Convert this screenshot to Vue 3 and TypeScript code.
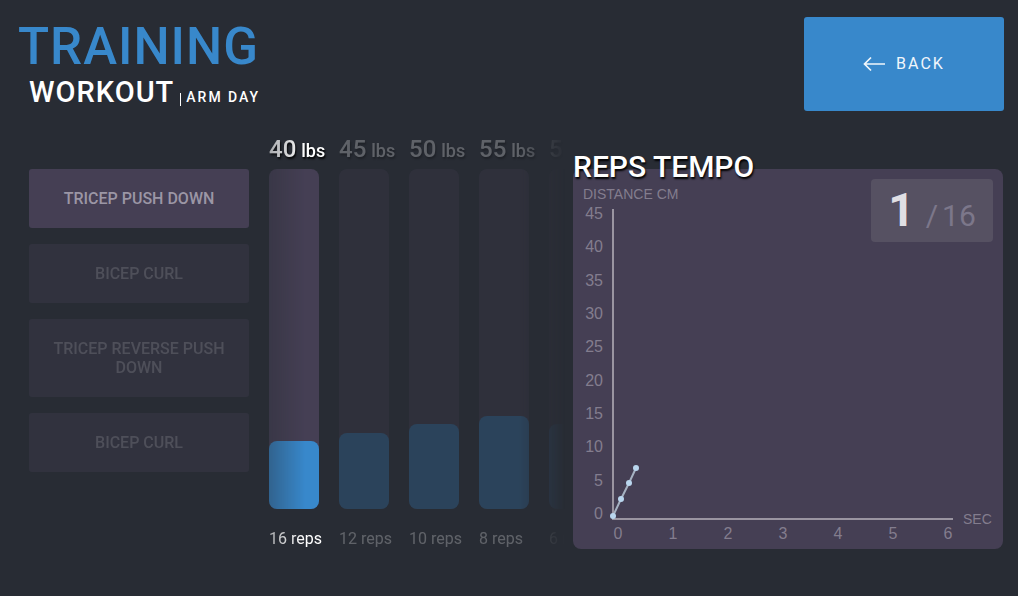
<script setup lang="ts">
import { ref } from 'vue'

interface WorkoutSet {
  weight: number
  reps: number
}

interface Point {
  x: number
  y: number
}

const exercises: string[] = [
  'Tricep push down',
  'Bicep curl',
  'Tricep reverse push down',
  'Bicep curl',
]

const sets: WorkoutSet[] = [
  { weight: 40, reps: 16 },
  { weight: 45, reps: 12 },
  { weight: 50, reps: 10 },
  { weight: 55, reps: 8 },
  { weight: 50, reps: 6 },
]

const MAX_WEIGHT = 200
const activeExercise = ref(0)
const activeSet = ref(0)
const currentRep = ref(1)

const distanceTicks = [45, 40, 35, 30, 25, 20, 15, 10, 5, 0]
const secondTicks = [0, 1, 2, 3, 4, 5, 6]

const tickY = (i: number): number => Math.round(50 + (i * 300) / 9)
const tickX = (i: number): number => 45 + i * 55

const points: Point[] = [
  { x: 40, y: 347 },
  { x: 48, y: 330 },
  { x: 56, y: 314 },
  { x: 63, y: 299 },
]
const trace = points.map((p) => `${p.x},${p.y}`).join(' ')
</script>

<template>
  <div class="page">
    <header class="header">
      <div class="heading">
        <h1 class="title">TRAINING</h1>
        <p class="subtitle">
          <span class="workout">WORKOUT</span>
          <span class="divider"></span>
          <span class="day">ARM DAY</span>
        </p>
      </div>
      <button class="back" type="button">
        <svg class="arrow" width="22" height="16" viewBox="0 0 22 16" aria-hidden="true">
          <path d="M22 8H1.5M8 1.5L1.5 8l6.500 6.500" fill="none" stroke="currentColor" stroke-width="1.700" />
        </svg>
        BACK
      </button>
    </header>

    <main class="content">
      <nav class="exercises" aria-label="Exercises">
        <button
          v-for="(name, i) in exercises"
          :key="i"
          type="button"
          class="exercise"
          :class="{ active: i === activeExercise }"
          @click="activeExercise = i"
        >
          {{ name }}
        </button>
      </nav>

      <ul class="sets">
        <li
          v-for="(set, i) in sets"
          :key="i"
          class="set"
          :class="{ active: i === activeSet }"
          @click="activeSet = i"
        >
          <span class="weight">{{ set.weight }} <small>lbs</small></span>
          <div class="bar">
            <div class="fill" :style="{ height: (set.weight / MAX_WEIGHT) * 100 + '%' }"></div>
          </div>
          <span class="reps">{{ set.reps }} reps</span>
        </li>
      </ul>

      <section class="tempo">
        <h2 class="tempo-title">REPS TEMPO</h2>
        <div class="panel">
          <svg class="chart" viewBox="0 0 430 380" role="img" aria-label="Distance over time">
            <text x="10" y="30" class="axis-name">DISTANCE CM</text>
            <text
              v-for="(tick, i) in distanceTicks"
              :key="'d' + tick"
              x="30"
              :y="tickY(i)"
              class="tick end"
            >{{ tick }}</text>
            <path d="M40 40V350H380" class="axis" />
            <text
              v-for="(tick, i) in secondTicks"
              :key="'s' + tick"
              :x="tickX(i)"
              y="370"
              class="tick middle"
            >{{ tick }}</text>
            <text x="390" y="355" class="axis-name">SEC</text>
            <polyline :points="trace" class="trace" />
            <circle v-for="p in points" :key="p.x" :cx="p.x" :cy="p.y" r="3" class="dot" />
          </svg>
          <div class="counter">
            <strong class="current">{{ currentRep }}</strong>
            <span class="total"><span class="slash">/</span>16</span>
          </div>
        </div>
      </section>
    </main>
  </div>
</template>

<style>
body {
  background: #282c34;
}
</style>

<style scoped>
.page {
  box-sizing: border-box;
  min-height: 100vh;
  padding: 17px 14px 0 18px;
  background: #282c34;
  color: #fff;
  font-family: Roboto, "Liberation Sans", sans-serif;
}

.header {
  display: flex;
  justify-content: space-between;
  align-items: flex-start;
}

.title {
  margin: 0;
  color: #3888cb;
  font-size: 51px;
  font-weight: 500;
  line-height: 60px;
  letter-spacing: 1px;
}

.subtitle {
  display: flex;
  align-items: baseline;
  margin: 0 0 0 11px;
  font-weight: 500;
  line-height: 30px;
}

.workout {
  font-size: 29px;
  letter-spacing: 1px;
}

.divider {
  align-self: center;
  width: 1px;
  height: 13px;
  margin: 9px 5px 0 6px;
  background: #fff;
}

.day {
  font-size: 14px;
  letter-spacing: 2px;
}

.back {
  display: flex;
  align-items: center;
  justify-content: center;
  gap: 11px;
  width: 200px;
  height: 94px;
  border: 0;
  border-radius: 3px;
  background: #3888cb;
  color: #f0f6fb;
  font: 400 16px/20px Roboto, sans-serif;
  letter-spacing: 2px;
  cursor: pointer;
}

.content {
  display: grid;
  grid-template-columns: 220px minmax(0, 162fr) minmax(0, 215fr);
  align-items: start;
  margin: 22px 1px 0 11px;
}

.exercises {
  display: flex;
  flex-direction: column;
  gap: 16px;
  padding-top: 35px;
}

.exercise {
  padding: 20px 16px;
  border: 0;
  border-radius: 3px;
  background: #453f54;
  color: #9b96a5;
  font: 500 16px/19px Roboto, sans-serif;
  text-transform: uppercase;
  opacity: 0.33;
  cursor: pointer;
}

.exercise.active {
  opacity: 1;
}

.sets {
  display: flex;
  gap: 20px;
  margin: 0 8px 0 20px;
  padding: 0;
  overflow: hidden;
  list-style: none;
  mask-image: linear-gradient(
    to right,
    rgba(0, 0, 0, 0.6),
    #000 36px,
    #000 calc(100% - 46px),
    rgba(0, 0, 0, 0.3) calc(100% - 16px),
    transparent
  );
}

.set {
  flex: 0 0 50px;
  min-width: 0;
  width: 50px;
  white-space: nowrap;
  opacity: 0.26;
}

.set.active {
  opacity: 1;
}

.weight {
  display: block;
  height: 35px;
  font-size: 24px;
  font-weight: 500;
  line-height: 30px;
  text-shadow: 1px 2px 2px #000;
}

.weight small {
  margin-left: -1px;
  font-size: 18px;
}

.bar {
  display: flex;
  align-items: flex-end;
  height: 340px;
  border-radius: 8px;
  background: #453f54;
}

.fill {
  width: 100%;
  border-radius: 8px;
  background: #3888cb;
}

.reps {
  display: block;
  margin-top: 20px;
  font-size: 16px;
  line-height: 20px;
}

.tempo {
  padding-top: 15px;
}

.tempo-title {
  position: relative;
  z-index: 1;
  margin: 0 0 -16px;
  font-size: 30px;
  font-weight: 500;
  line-height: 36px;
  text-shadow: 1px 2px 2px #000;
}

.panel {
  position: relative;
  border-radius: 8px;
  background: #453f54;
}

.chart {
  display: block;
  width: 100%;
}

.tick,
.axis-name {
  fill: #837d8e;
  font-family: "Liberation Sans", Arial, sans-serif;
  font-size: 16px;
}

.axis-name {
  font-size: 14px;
}

.end {
  text-anchor: end;
}

.middle {
  text-anchor: middle;
}

.axis {
  fill: none;
  stroke: #9a95a1;
  stroke-width: 2;
}

.trace {
  fill: none;
  stroke: #a5b1c1;
  stroke-width: 2;
}

.dot {
  fill: #b9d6ee;
}

.counter {
  position: absolute;
  top: 10px;
  right: 10px;
  display: flex;
  align-items: baseline;
  justify-content: center;
  gap: 11px;
  width: 122px;
  height: 63px;
  border-radius: 4px;
  background: #565162;
  line-height: 63px;
}

.current {
  color: #e0dfe4;
  font-size: 46px;
  font-weight: 700;
}

.total {
  color: #7c778a;
  font-size: 30px;
}

.slash {
  margin-right: 4px;
}
</style>
